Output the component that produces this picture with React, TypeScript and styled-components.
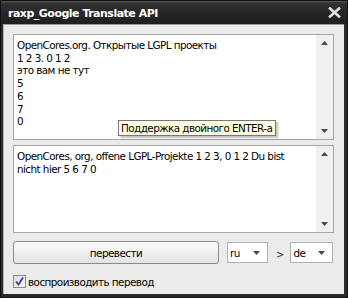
import React from "react";
import styled, { createGlobalStyle } from "styled-components";

const Global = createGlobalStyle`
  html, body { margin: 0; padding: 0; background: #1e1e1e; }
  body { font-family: "DejaVu Sans", sans-serif; }
`;

const Window = styled.div`
  width: 348px;
  height: 298px;
  box-sizing: border-box;
  background: #2a2a2a;
  border: 1px solid #111;
  display: flex;
  flex-direction: column;
  overflow: hidden;
`;

const TitleBar = styled.div`
  height: 23px;
  flex: none;
  display: flex;
  align-items: center;
  justify-content: space-between;
  padding: 0 6px 0 7px;
  background: linear-gradient(#5a5a5a 0px, #333 2px, #262626 12px, #1f1f1f 100%);
`;

const Title = styled.span`
  color: #fff;
  font-family: "DejaVu Sans", sans-serif;
  font-weight: bold;
  font-size: 11px;
  letter-spacing: -0.5px;
  padding-top: 1px;
`;

const CloseIcon = styled.svg`
  width: 13px;
  height: 11px;
`;

const Client = styled.div`
  flex: 1;
  margin: 0 3px 3px 2px;
  background: #ebebeb;
  border-top: 1px solid #9a9a9a;
  border-left: 1px solid #b8b8b8;
  padding: 9px 10px 0 9px;
  display: flex;
  flex-direction: column;
`;

const TextBox = styled.div<{ $h: number; $mt?: number }>`
  height: ${(p) => p.$h}px;
  margin-top: ${(p) => p.$mt ?? 0}px;
  box-sizing: border-box;
  background: #fff;
  border: 1px solid #a5a5a5;
  display: flex;
  position: relative;
`;

const TextContent = styled.div`
  flex: 1;
  padding: 4px 4px 0 3px;
  font-family: "DejaVu Sans", sans-serif;
  font-size: 10.4px;
  letter-spacing: -0.55px;
  line-height: 12.7px;
  color: #000;
`;

const Line = styled.div`
  white-space: pre;
`;

const ScrollBar = styled.div`
  width: 17px;
  flex: none;
  background: #f0f0f0;
  display: flex;
  flex-direction: column;
  justify-content: space-between;
  align-items: center;
  padding: 6px 0 6px;
`;

const Arrow = styled.svg`
  width: 7px;
  height: 4px;
`;

const Tooltip = styled.div`
  position: absolute;
  left: 104px;
  top: 85px;
  background: #ffffe1;
  border: 1px solid #777;
  box-shadow: 2px 2px 2px rgba(0, 0, 0, 0.25);
  padding: 1px 3px 1px 2px;
  font-family: "DejaVu Sans", sans-serif;
  font-size: 10.4px;
  letter-spacing: -0.55px;
  line-height: 12px;
  white-space: nowrap;
  z-index: 2;
`;

const Controls = styled.div`
  display: flex;
  align-items: center;
  margin-top: 8px;
  height: 23px;
`;

const Button = styled.div`
  width: 206px;
  height: 23px;
  box-sizing: border-box;
  border: 1px solid #8a8a8a;
  border-radius: 3px;
  background: linear-gradient(#fafafa, #f0f0f0 50%, #e2e2e2);
  display: flex;
  align-items: center;
  justify-content: center;
  font-family: "DejaVu Sans", sans-serif;
  font-size: 10.4px;
  letter-spacing: -0.55px;
  color: #000;
`;

const Select = styled.div<{ $w: number; $ml: number }>`
  width: ${(p) => p.$w}px;
  margin-left: ${(p) => p.$ml}px;
  height: 21px;
  box-sizing: border-box;
  border: 1px solid #b0b0b0;
  background: #fff;
  display: flex;
  align-items: center;
  justify-content: space-between;
  padding: 0 7px 0 2px;
  font-family: "DejaVu Sans", sans-serif;
  font-size: 10.4px;
  letter-spacing: -0.4px;
`;

const Gt = styled.span`
  margin-left: 8px;
  font-family: "DejaVu Sans", sans-serif;
  font-size: 10px;
  color: #333;
  padding-top: 4px;
`;

const CheckRow = styled.div`
  display: flex;
  align-items: center;
  margin-top: 11px;
  gap: 2px;
`;

const CheckBox = styled.div`
  width: 13px;
  height: 13px;
  box-sizing: border-box;
  border: 1px solid #8a8a8a;
  background: linear-gradient(135deg, #dcdcdc, #f8f8f8);
  display: flex;
  align-items: center;
  justify-content: center;
`;

const Label = styled.span`
  font-family: "DejaVu Sans", sans-serif;
  font-size: 10.4px;
  letter-spacing: -0.55px;
  color: #000;
`;

const ArrowUp = () => (
  <Arrow viewBox="0 0 7 4">
    <polygon points="3.5,0 7,4 0,4" fill="#4a4a4a" />
  </Arrow>
);
const ArrowDown = () => (
  <Arrow viewBox="0 0 7 4">
    <polygon points="0,0 7,0 3.5,4" fill="#4a4a4a" />
  </Arrow>
);

const sourceLines = [
  "OpenCores.org. Открытые LGPL проекты",
  "1 2 3. 0 1 2",
  "это вам не тут",
  "5",
  "6",
  "7",
  "0",
];

const resultLines = [
  "OpenCores, org, offene LGPL-Projekte 1 2 3, 0 1 2 Du bist",
  "nicht hier 5 6 7 0",
];

export default function App() {
  return (
    <>
      <Global />
      <Window>
        <TitleBar>
          <Title>raxp_Google Translate API</Title>
          <CloseIcon viewBox="0 0 13 11">
            <path d="M2 1.5 L11 9.5 M11 1.5 L2 9.5" stroke="#e4e4e4" strokeWidth="2.6" strokeLinecap="square" />
          </CloseIcon>
        </TitleBar>
        <Client>
          <TextBox $h={106}>
            <TextContent>
              {sourceLines.map((l, i) => (
                <Line key={i}>{l}</Line>
              ))}
            </TextContent>
            <ScrollBar>
              <ArrowUp />
              <ArrowDown />
            </ScrollBar>
            <Tooltip>Поддержка двойного ENTER-а</Tooltip>
          </TextBox>
          <TextBox $h={88} $mt={5}>
            <TextContent>
              {resultLines.map((l, i) => (
                <Line key={i}>{l}</Line>
              ))}
            </TextContent>
            <ScrollBar>
              <ArrowUp />
              <ArrowDown />
            </ScrollBar>
          </TextBox>
          <Controls>
            <Button>перевести</Button>
            <Select $w={41} $ml={8}>
              <span>ru</span>
              <ArrowDown />
            </Select>
            <Gt>&gt;</Gt>
            <Select $w={43} $ml={6}>
              <span>de</span>
              <ArrowDown />
            </Select>
          </Controls>
          <CheckRow>
            <CheckBox>
              <svg width="9" height="9" viewBox="0 0 9 9">
                <path d="M1 4.5 L3.5 7.5 L8 0.5" stroke="#3d3aa0" strokeWidth="1.8" fill="none" />
              </svg>
            </CheckBox>
            <Label>воспроизводить перевод</Label>
          </CheckRow>
        </Client>
      </Window>
    </>
  );
}
